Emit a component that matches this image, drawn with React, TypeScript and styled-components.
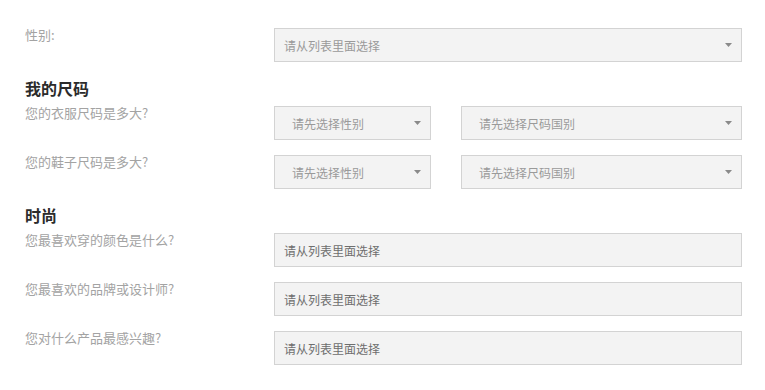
import React from "react";
import styled, { createGlobalStyle } from "styled-components";

const Global = createGlobalStyle`
  html, body { margin: 0; padding: 0; background: #ffffff; }
  body { font-family: "Microsoft YaHei", "Noto Sans CJK SC", "Noto Sans", sans-serif; }
  * { box-sizing: border-box; }
`;

const Form = styled.form`
  width: 765px;
  padding: 28px 23px 0 25px;
  display: flex;
  flex-direction: column;
`;

const Row = styled.div<{ $gap?: number }>`
  display: grid;
  grid-template-columns: 249px 1fr;
  align-items: start;
  margin-top: ${(p) => (p.$gap ?? 15)}px;
`;

const Label = styled.label`
  font-size: 13px;
  line-height: 20px;
  color: #a3a3a3;
  margin-top: -3px;
  white-space: nowrap;
`;

const Heading = styled.h3`
  margin: 14px 0 0;
  font-size: 16px;
  line-height: 24px;
  font-weight: 700;
  color: #2b2b2b;
`;

const Pair = styled.div`
  display: grid;
  grid-template-columns: 157px 1fr;
  gap: 30px;
`;

const SelectBox = styled.div<{ $pad: number }>`
  height: 34px;
  border: 1px solid #d3d3d3;
  background: #f3f3f3;
  display: flex;
  align-items: center;
  justify-content: space-between;
  padding: 0 9px 0 ${(p) => p.$pad}px;
  font-size: 12px;
  color: #9a9a9a;
  cursor: pointer;
`;

const Arrow = styled.svg`
  width: 7px;
  height: 4px;
  flex: none;
`;

const TextInput = styled.input`
  height: 34px;
  width: 100%;
  border: 1px solid #d3d3d3;
  background: #f3f3f3;
  padding: 0 9px;
  font-family: inherit;
  font-size: 12px;
  color: #666;
  outline: none;
  &::placeholder { color: #6e6e6e; }
`;

const Select = ({ text, pad = 9 }: { text: string; pad?: number }) => (
  <SelectBox $pad={pad}>
    <span>{text}</span>
    <Arrow viewBox="0 0 7 4">
      <path d="M0 0H7L3.5 4Z" fill="#8a8a8a" />
    </Arrow>
  </SelectBox>
);

export default function App() {
  return (
    <>
      <Global />
      <Form>
        <Row $gap={0}>
          <Label>性别:</Label>
          <Select text="请从列表里面选择" />
        </Row>

        <Heading>我的尺码</Heading>
        <Row $gap={6}>
          <Label>您的衣服尺码是多大?</Label>
          <Pair>
            <Select text="请先选择性别" pad={17} />
            <Select text="请先选择尺码国别" pad={17} />
          </Pair>
        </Row>
        <Row>
          <Label>您的鞋子尺码是多大?</Label>
          <Pair>
            <Select text="请先选择性别" pad={17} />
            <Select text="请先选择尺码国别" pad={17} />
          </Pair>
        </Row>

        <Heading>时尚</Heading>
        <Row $gap={6}>
          <Label>您最喜欢穿的颜色是什么?</Label>
          <TextInput placeholder="请从列表里面选择" />
        </Row>
        <Row>
          <Label>您最喜欢的品牌或设计师?</Label>
          <TextInput placeholder="请从列表里面选择" />
        </Row>
        <Row>
          <Label>您对什么产品最感兴趣?</Label>
          <TextInput placeholder="请从列表里面选择" />
        </Row>
      </Form>
    </>
  );
}
